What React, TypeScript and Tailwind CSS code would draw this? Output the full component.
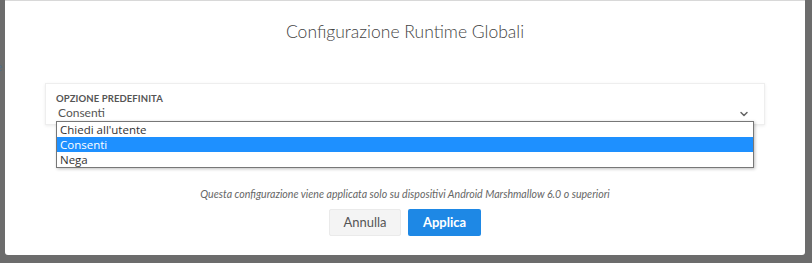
import { ChevronDown } from "lucide-react";

const options = ["Chiedi all'utente", "Consenti", "Nega"];

export default function App() {
  const selected = "Consenti";

  return (
    <div className="w-[812px] h-[263px] bg-[#6c6c6c] flex overflow-hidden font-['Lato',sans-serif]">
      {/* pezzo di pagina dietro l'overlay */}
      <div className="w-[5px] shrink-0 flex flex-col pt-[60px] overflow-hidden">
        <span className="text-[12px] leading-[14px] text-[#4f6f8c] -ml-[4px]">e</span>
      </div>

      {/* Modal */}
      <div className="w-[800px] h-[255px] shrink-0 bg-white rounded-b-[3px] border-t border-[#d8d8d8] flex flex-col items-center">
        <h1 className="mt-[20px] text-[17.5px] leading-[22px] font-light text-[#444]">Configurazione Runtime Globali</h1>

        {/* Select */}
        <div className="relative mt-[40px] w-[720px] h-[42px] bg-white border border-[#eee] shadow-[0_1px_3px_rgba(0,0,0,0.08)] px-[10px] pt-[9px]">
          <p className="text-[9.5px] leading-[12px] font-bold text-[#555] tracking-[0.1px]">OPZIONE PREDEFINITA</p>
          <div className="flex items-center justify-between pl-[2px] pr-[4px]">
            <span className="text-[12px] leading-[16px] text-[#555]">{selected}</span>
            <ChevronDown size={12} strokeWidth={3} className="text-[#666] mt-[2px]" />
          </div>

          {/* Lista aperta */}
          <div className="absolute left-[10px] top-[37px] w-[698px] bg-white border border-[#777] shadow-[1px_1px_3px_rgba(0,0,0,0.25)] z-10 font-['Open_Sans',sans-serif]">
            {options.map((o) => (
              <div
                key={o}
                className={`h-[15px] leading-[15px] text-[11.5px] px-[3px] ${o === selected ? "bg-[#1e90ff] text-white" : "text-[#333]"}`}
              >
                {o}
              </div>
            ))}
          </div>
        </div>

        <p className="mt-[63px] text-[10.6px] leading-[13px] italic text-[#666]">
          Questa configurazione viene applicata solo su dispositivi Android Marshmallow 6.0 o superiori
        </p>

        <div className="flex gap-[7px] mt-[8px]">
          <button className="w-[72px] h-[27px] bg-[#f4f4f4] border border-[#eaeaea] rounded-[2px] text-[13px] text-[#555]">
            Annulla
          </button>
          <button className="w-[73px] h-[27px] bg-[#1e88e5] rounded-[2px] text-[13px] font-bold text-white">
            Applica
          </button>
        </div>
      </div>
    </div>
  );
}
